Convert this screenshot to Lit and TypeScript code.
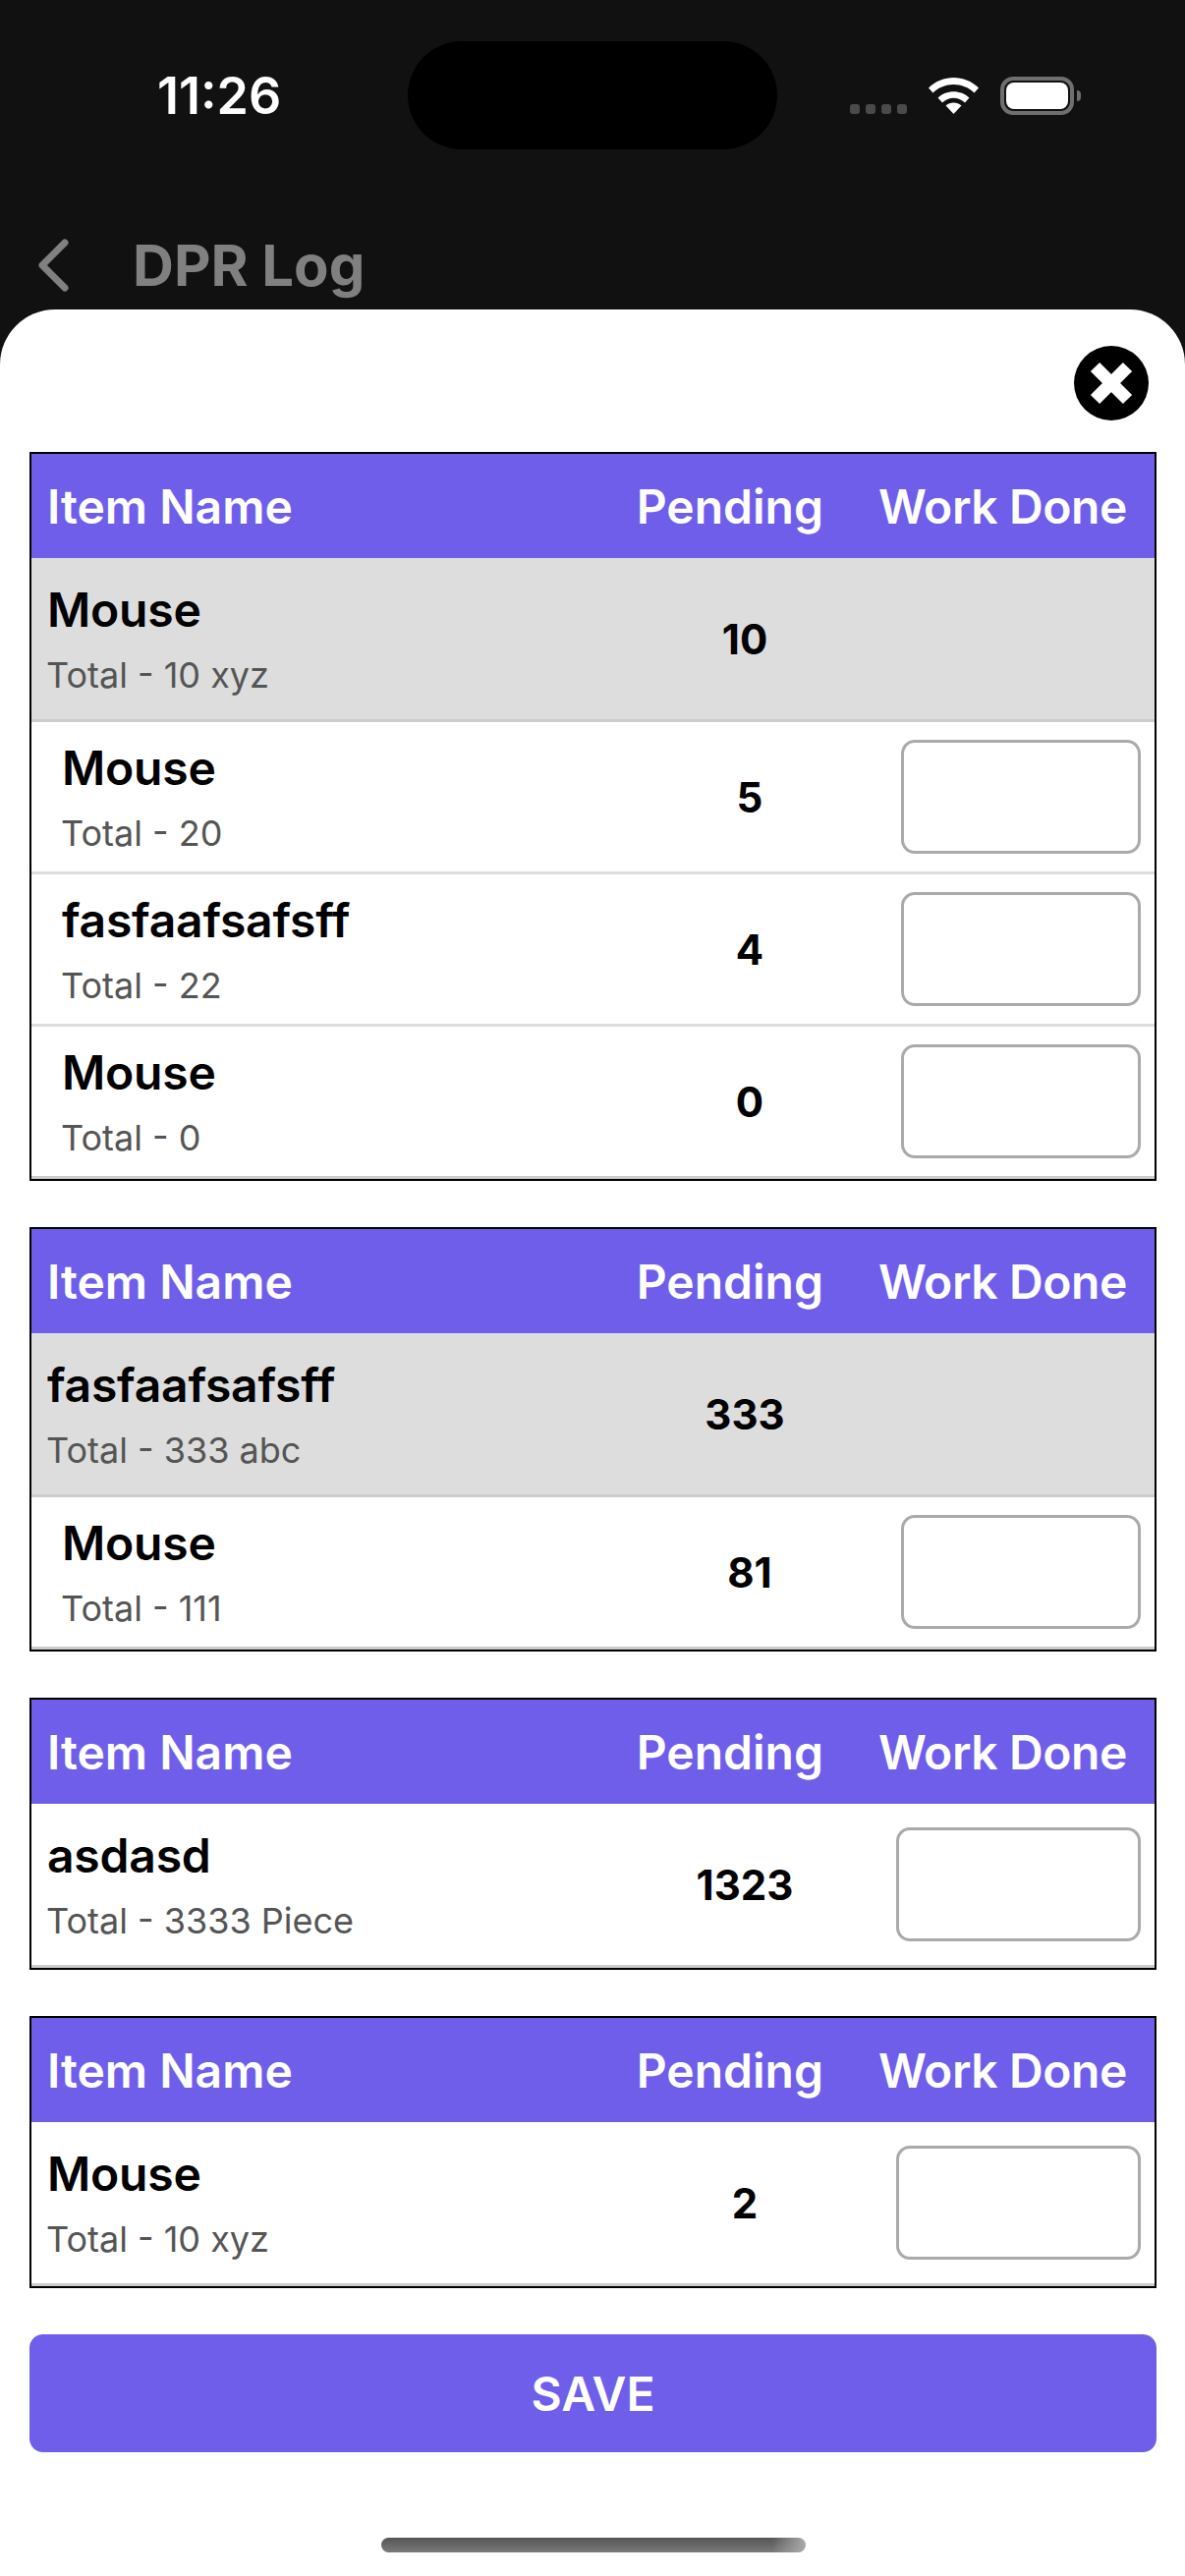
import { LitElement, html, css, nothing } from "lit";
import { customElement } from "lit/decorators.js";

type Row = { name: string; total: string; pending: string; input?: boolean };
type Group = { parent: Row; children: Row[] };

const GROUPS: Group[] = [
  {
    parent: { name: "Mouse", total: "Total - 10 xyz", pending: "10" },
    children: [
      { name: "Mouse", total: "Total - 20", pending: "5" },
      { name: "fasfaafsafsff", total: "Total - 22", pending: "4" },
      { name: "Mouse", total: "Total - 0", pending: "0" },
    ],
  },
  {
    parent: { name: "fasfaafsafsff", total: "Total - 333 abc", pending: "333" },
    children: [{ name: "Mouse", total: "Total - 111", pending: "81" }],
  },
  {
    parent: { name: "asdasd", total: "Total - 3333 Piece", pending: "1323", input: true },
    children: [],
  },
  {
    parent: { name: "Mouse", total: "Total - 10 xyz", pending: "2", input: true },
    children: [],
  },
];

@customElement("app-root")
export class AppRoot extends LitElement {
  static styles = css`
    :host {
      display: flex;
      flex-direction: column;
      width: 1206px;
      height: 2622px;
      overflow: hidden;
      background: #111111;
      font-family: Inter, "Noto Sans", sans-serif;
    }
    .status {
      display: flex;
      align-items: flex-start;
      height: 200px;
      padding-top: 42px;
      box-sizing: border-box;
    }
    .time {
      width: 415px;
      box-sizing: border-box;
      padding: 28px 0 0 160px;
      color: #fff;
      font-size: 52px;
      line-height: 56px;
      font-weight: 600;
    }
    .island {
      width: 376px;
      height: 110px;
      border-radius: 55px;
      background: #000;
    }
    .indicators {
      display: flex;
      align-items: flex-start;
      padding: 36px 0 0 74px;
    }
    .dots {
      display: flex;
      gap: 6px;
      margin-top: 28px;
      margin-right: 22px;
    }
    .dots i {
      width: 10px;
      height: 10px;
      border-radius: 3px;
      background: #4a4a4a;
    }
    .wifi {
      display: block;
      width: 51px;
      height: 37px;
      margin-top: 1px;
      margin-right: 22px;
    }
    .battery {
      width: 75px;
      height: 39px;
      box-sizing: border-box;
      border: 4px solid #6f6f6f;
      border-radius: 13px;
      padding: 2px;
    }
    .battery b {
      display: block;
      height: 100%;
      border-radius: 8px;
      background: #fff;
    }
    .cap {
      width: 4px;
      height: 11px;
      margin: 14px 0 0 3px;
      border-radius: 0 4px 4px 0;
      background: #6f6f6f;
    }
    .nav {
      display: flex;
      align-items: center;
      height: 115px;
      box-sizing: border-box;
      padding: 25px 0 0 38px;
      color: #808080;
    }
    .nav svg {
      display: block;
      width: 32px;
      height: 54px;
      margin-right: 65px;
    }
    .nav span {
      font-size: 58px;
      font-weight: 700;
    }
    .sheet {
      flex: 1;
      display: flex;
      flex-direction: column;
      background: #fff;
      border-radius: 56px 56px 0 0;
      padding: 37px 29px 0 30px;
    }
    .close {
      display: block;
      align-self: flex-end;
      width: 76px;
      height: 76px;
      margin: 0 8px 32px 0;
    }
    .table {
      border: 2px solid #000;
      margin-bottom: 47px;
    }
    .head {
      display: flex;
      align-items: center;
      height: 106px;
      padding: 0 28px 0 16px;
      background: #6e5eea;
      color: #fff;
      font-size: 48px;
      font-weight: 600;
    }
    .head .grow {
      flex: 1;
    }
    .head .done {
      margin-left: 56px;
      letter-spacing: -0.4px;
    }
    .row {
      display: flex;
      align-items: center;
      box-sizing: border-box;
      height: 155px;
      padding: 0 14px 0 31px;
      border-bottom: 3px solid #dddddd;
    }
    .row.parent {
      height: 167px;
      padding-left: 16px;
      border-bottom-color: #cccccc;
    }
    .row.shade {
      background: #dddddd;
    }
    .row.last {
      border-bottom-color: #cccccc;
    }
    .info {
      flex: 1;
      min-width: 0;
      padding-top: 1px;
    }
    .name {
      color: #000;
      font-size: 48px;
      line-height: 56px;
      font-weight: 600;
      letter-spacing: -0.2px;
    }
    .total {
      margin-top: 16px;
      margin-left: -1px;
      color: #555555;
      font-size: 36px;
      line-height: 44px;
    }
    .pending {
      width: 308px;
      text-align: center;
      color: #000;
      font-size: 42px;
      font-weight: 700;
    }
    .field {
      width: 244px;
    }
    .parent .field {
      width: 249px;
    }
    input {
      display: block;
      width: 100%;
      height: 116px;
      box-sizing: border-box;
      border: 3px solid #aaaaaa;
      border-radius: 14px;
      background: #fff;
      outline: none;
    }
    .save {
      display: block;
      width: 100%;
      height: 120px;
      border: none;
      border-radius: 14px;
      background: #6e5eea;
      color: #fff;
      font-family: inherit;
      font-size: 48px;
      font-weight: 600;
    }
    .home {
      width: 432px;
      height: 15px;
      margin: 87px auto 0;
      border-radius: 8px;
      background: linear-gradient(90deg, transparent 92%, #aaaaaa 100%),
        linear-gradient(180deg, #555555, #7a7a7a);
    }
  `;

  private renderRow(r: Row, cls: string) {
    return html`
      <div class="row ${cls}">
        <div class="info">
          <div class="name">${r.name}</div>
          <div class="total">${r.total}</div>
        </div>
        <div class="pending">${r.pending}</div>
        <div class="field">${r.input ? html`<input type="text" />` : nothing}</div>
      </div>
    `;
  }

  private renderGroup(g: Group) {
    const n = g.children.length;
    return html`
      <div class="table">
        <div class="head">
          <span class="grow">Item Name</span>
          <span>Pending</span>
          <span class="done">Work Done</span>
        </div>
        ${this.renderRow(g.parent, n ? "parent shade" : "parent last")}
        ${g.children.map((c, i) =>
          this.renderRow({ ...c, input: true }, i === n - 1 ? "last" : "")
        )}
      </div>
    `;
  }

  render() {
    return html`
      <div class="status">
        <div class="time">11:26</div>
        <div class="island"></div>
        <div class="indicators">
          <div class="dots"><i></i><i></i><i></i><i></i></div>
          <svg class="wifi" viewBox="0 0 51 37" fill="#fff">
            <path d="M0 10.5C14-3.5 37-3.5 51 10.5L46.5 15.5C35 4 16 4 4.5 15.5Z" />
            <path d="M9.5 20.5C18 12 33 12 41.5 20.5L37 25.5C30.5 19 20.5 19 14 25.5Z" />
            <path d="M17.5 28.5C22 24.5 29 24.5 33.5 28.5L25.5 37Z" />
          </svg>
          <div class="battery"><b></b></div>
          <div class="cap"></div>
        </div>
      </div>
      <div class="nav">
        <svg viewBox="0 0 32 54" fill="none" stroke="currentColor" stroke-width="7" stroke-linecap="round" stroke-linejoin="round">
          <path d="M28 4L5 27L28 50" />
        </svg>
        <span>DPR Log</span>
      </div>
      <div class="sheet">
        <svg class="close" viewBox="0 0 76 76">
          <circle cx="38" cy="38" r="38" fill="#000" />
          <path d="M21.5 21.5L54.5 54.5M54.5 21.5L21.5 54.5" stroke="#fff" stroke-width="13" fill="none" />
        </svg>
        ${GROUPS.map((g) => this.renderGroup(g))}
        <button class="save">SAVE</button>
        <div class="home"></div>
      </div>
    `;
  }
}
